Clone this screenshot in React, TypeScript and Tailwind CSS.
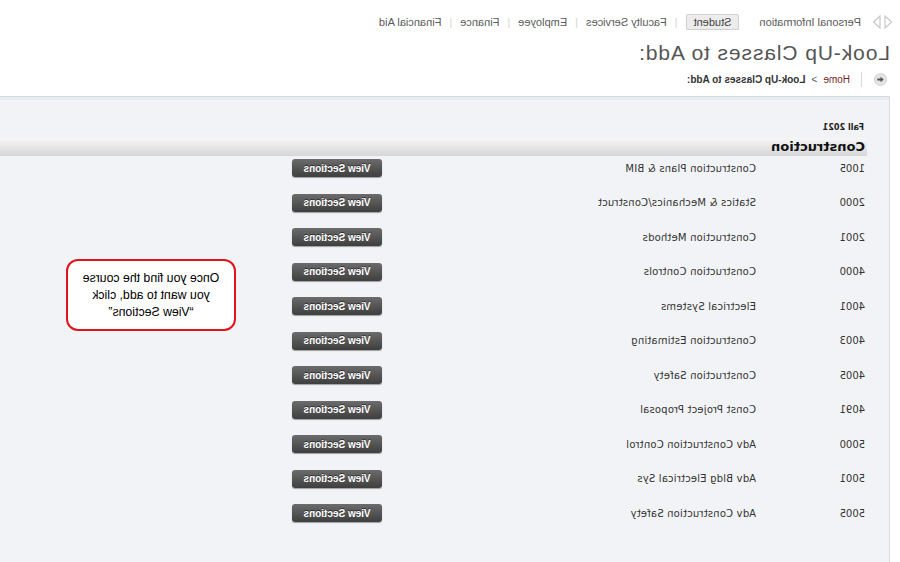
import React from 'react';

const courses = [
  ['1005', 'Construction Plans & BIM'],
  ['2000', 'Statics & Mechanics/Construct'],
  ['2001', 'Construction Methods'],
  ['4000', 'Construction Controls'],
  ['4001', 'Electrical Systems'],
  ['4003', 'Construction Estimating'],
  ['4005', 'Construction Safety'],
  ['4091', 'Const Project Proposal'],
  ['5000', 'Adv Construction Control'],
  ['5001', 'Adv Bldg Electrical Sys'],
  ['5005', 'Adv Construction Safety'],
];

function Sep() {
  return <span className="text-[#d4d4d4] text-[11px] mx-[8px]">|</span>;
}

export default function App() {
  return (
    // the reference is a mirrored capture, so the whole page is flipped
    <div className="relative w-[900px] h-[562px] overflow-hidden bg-white -scale-x-100 font-['Liberation_Sans',Arial,sans-serif]">
      {/* tabs */}
      <div className="flex items-center h-[16px] mt-[14px] pl-[7px] text-[11px] text-[#5a5a5a]">
        <div className="flex items-center gap-[3px] mr-[11px]">
          <svg width="9" height="14" viewBox="0 0 9 14">
            <path d="M8 1 L1.5 7 L8 13 Z" fill="none" stroke="#c8c8c8" strokeWidth="1.2" />
          </svg>
          <svg width="9" height="14" viewBox="0 0 9 14">
            <path d="M1 1 L7.5 7 L1 13 Z" fill="none" stroke="#c8c8c8" strokeWidth="1.2" />
          </svg>
        </div>
        <span>Personal Information</span>
        <span className="ml-[20px] px-[7px] h-[16px] leading-[15px] bg-[#ececec] border border-[#d0d0d0] rounded-t-[2px] text-[#444]">
          Student
        </span>
        <Sep />
        <span>Faculty Services</span>
        <Sep />
        <span>Employee</span>
        <Sep />
        <span>Finance</span>
        <Sep />
        <span>Financial Aid</span>
      </div>

      {/* title */}
      <h1 className="mt-[11px] ml-[10px] text-[21px] leading-[24px] tracking-[0.9px] text-[#555] font-normal">
        Look-Up Classes to Add:
      </h1>

      {/* breadcrumb */}
      <div className="flex items-center mt-[6px] h-[16px] ml-[13px] text-[10px]">
        <svg width="13" height="13" viewBox="0 0 14 14">
          <circle cx="7" cy="7" r="6.5" fill="#e4e4e4" stroke="#cfcfcf" />
          <path d="M3.5 7 L7 4 L7 6 L10.5 6 L10.5 8 L7 8 L7 10 Z" fill="#555" />
        </svg>
        <span className="w-px h-[15px] bg-[#d8d8d8] ml-[12px]" />
        <span className="ml-[11px] text-[#7a1f1f]">Home</span>
        <span className="mx-[6px] text-[#555]">&gt;</span>
        <span className="font-bold text-[#333]">Look-Up Classes to Add:</span>
      </div>

      {/* content panel */}
      <div className="mt-[9px] ml-[10px] h-[480px] border-t border-l border-[#d9dbdf] bg-[#f2f3f6]">
        <div className="h-[3px] bg-[#e6eef1]" />
        <div className="pl-[22px]">
          <div className="mt-[21px] pl-[3px] h-[12px] leading-[12px] text-[9px] font-bold text-[#222] font-['DejaVu_Sans_Condensed','DejaVu_Sans',sans-serif]">
            Fall 2021
          </div>
          <div className="mt-[5px] h-[18px] pl-[2px] flex items-center bg-gradient-to-b from-[#f7f7f7] to-[#d6d6d6] font-['DejaVu_Sans',Verdana,sans-serif] text-[13px] font-bold text-[#111]">
            Construction
          </div>
          <div className="flex flex-col gap-[10.5px] font-['DejaVu_Sans',Verdana,sans-serif] text-[#333]">
            {courses.map(([num, title]) => (
              <div key={num} className="flex items-center h-[24px] pl-[2px]">
                <span className="w-[109px] text-[10px]">{num}</span>
                <span className="w-[374px] text-[10px] tracking-[0.2px]">{title}</span>
                <button className="w-[90px] h-[18px] rounded-[3px] bg-gradient-to-b from-[#6c6c6c] to-[#3f3f3f] shadow-[0_1px_1px_rgba(0,0,0,0.35)] text-white text-[10px] font-bold font-['Liberation_Sans',Arial,sans-serif] [text-shadow:0_-1px_0_rgba(0,0,0,0.5)]">
                  View Sections
                </button>
              </div>
            ))}
          </div>
        </div>
      </div>

      {/* annotation callout */}
      <div className="absolute left-[664px] top-[259px] w-[170px] h-[72px] rounded-[12px] border-2 border-[#e0141a] bg-white flex items-center justify-center text-center text-[12.3px] leading-[17px] text-black">
        Once you find the course
        <br />
        you want to add, click
        <br />
        “View Sections”
      </div>
    </div>
  );
}
